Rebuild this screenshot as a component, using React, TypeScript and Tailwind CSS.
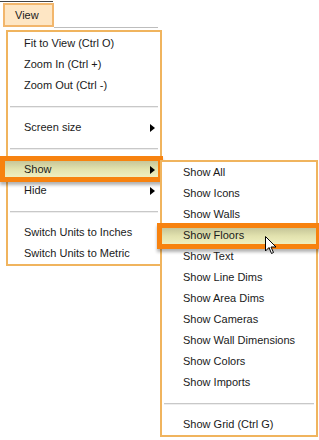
import React from "react";

const font = { fontFamily: '"Liberation Sans", Arial, sans-serif' };

function Arrow() {
  return (
    <svg width="5" height="8" viewBox="0 0 5 8" className="absolute right-[5px] top-[7px]">
      <path d="M0 0 L5 4 L0 8 Z" fill="#000" />
    </svg>
  );
}

function Highlight({ kind }: { kind: "main" | "sub" }) {
  const pos = kind === "main" ? "left-[-8px] top-[-3px] w-[163px]" : "left-[-5px] top-[-2px] w-[164px]";
  return (
    <div
      className={`absolute ${pos} h-[26px] border-[5px] border-[#f7820f] bg-gradient-to-b from-[#c6c699] via-[#e2e2ae] to-[#efefc0] shadow-[0_3px_3px_rgba(0,0,0,0.3)]`}
    />
  );
}

function Item({
  label,
  arrow,
  hl,
  pad,
  children,
}: {
  label: string;
  arrow?: boolean;
  hl?: "main" | "sub";
  pad: string;
  children?: React.ReactNode;
}) {
  return (
    <div className={`relative h-[21px] flex items-center ${pad}`}>
      {hl && <Highlight kind={hl} />}
      <span className="relative text-[11px] text-[#1a1a1a] leading-none">{label}</span>
      {arrow && <Arrow />}
      {children}
    </div>
  );
}

function Sep() {
  return (
    <div className="h-[21px] flex items-center px-[2px]">
      <div className="w-full h-[2px] bg-[#c8c8c8] border-b border-[#eeeeee]" />
    </div>
  );
}

function Cursor() {
  return (
    <svg className="absolute left-[103px] top-[11px]" width="12" height="19" viewBox="0 0 12 19">
      <path
        d="M0.5 0.5 L0.5 15 L4 11.5 L6.5 17.5 L8.5 16.5 L6 11 L11 11 Z"
        fill="#fff"
        stroke="#000"
        strokeWidth="1"
        strokeLinejoin="round"
      />
    </svg>
  );
}

function SubMenu() {
  const sub = [
    "Show All",
    "Show Icons",
    "Show Walls",
    "Show Floors",
    "Show Text",
    "Show Line Dims",
    "Show Area Dims",
    "Show Cameras",
    "Show Wall Dimensions",
    "Show Colors",
    "Show Imports",
  ];
  return (
    <div className="absolute left-[152px] top-px w-[158px] border-2 border-[#f0b45e] bg-white flex flex-col">
      {sub.map((s) =>
        s === "Show Floors" ? (
          <Item key={s} label={s} hl="sub" pad="pl-[21px]">
            <Cursor />
          </Item>
        ) : (
          <Item key={s} label={s} pad="pl-[21px]" />
        )
      )}
      <Sep />
      <Item label="Show Grid (Ctrl G)" pad="pl-[21px]" />
    </div>
  );
}

export default function App() {
  return (
    <div className="w-[319px] h-[440px] bg-white overflow-hidden flex flex-col" style={font}>
      <div className="w-[53px] h-px mt-px bg-[#444]" />
      <div className="flex items-end pl-[3px] pt-px">
        <div className="w-[51px] h-[24px] bg-[#fee6c4] border-2 border-[#f2b66c] flex items-center pl-[10px]">
          <span className="text-[11px] text-[#1a1a1a]">View</span>
        </div>
        <div className="w-[104px] h-px bg-[#bdbdbd] mb-[-1px]" />
      </div>

      <div className="ml-[6px] mt-[3px] w-[156px] border-2 border-[#f0b45e] bg-white pt-px flex flex-col">
        <Item label="Fit to View (Ctrl O)" pad="pl-[16px]" />
        <Item label="Zoom In (Ctrl +)" pad="pl-[16px]" />
        <Item label="Zoom Out (Ctrl -)" pad="pl-[16px]" />
        <Sep />
        <Item label="Screen size" arrow pad="pl-[16px]" />
        <Sep />
        <Item label="Show" arrow hl="main" pad="pl-[16px]">
          <SubMenu />
        </Item>
        <Item label="Hide" arrow pad="pl-[16px]" />
        <Sep />
        <Item label="Switch Units to Inches" pad="pl-[16px]" />
        <Item label="Switch Units to Metric" pad="pl-[16px]" />
      </div>
    </div>
  );
}
